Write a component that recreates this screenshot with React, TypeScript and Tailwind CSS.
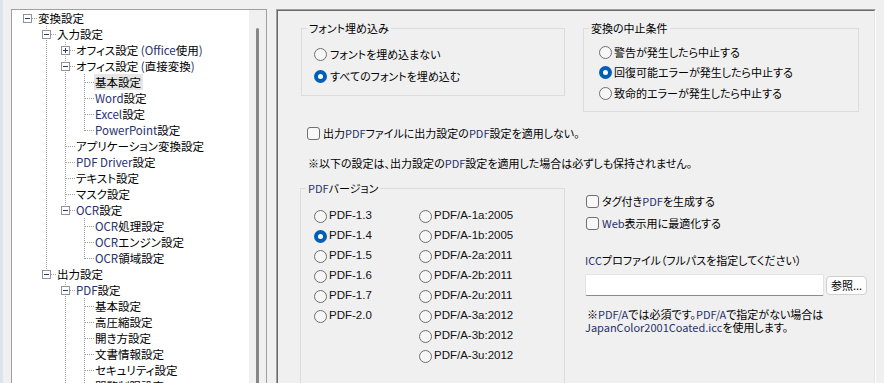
import React from "react";

type TreeNode = {
  label: string;
  level: number;
  box?: "-" | "+";
  last?: boolean;
  selected?: boolean;
};

const tree: TreeNode[] = [
  { label: "変換設定", level: 0, box: "-", last: true },
  { label: "入力設定", level: 1, box: "-" },
  { label: "オフィス設定 (Office使用)", level: 2, box: "+" },
  { label: "オフィス設定 (直接変換)", level: 2, box: "-" },
  { label: "基本設定", level: 3, selected: true },
  { label: "Word設定", level: 3 },
  { label: "Excel設定", level: 3 },
  { label: "PowerPoint設定", level: 3, last: true },
  { label: "アプリケーション変換設定", level: 2 },
  { label: "PDF Driver設定", level: 2 },
  { label: "テキスト設定", level: 2 },
  { label: "マスク設定", level: 2 },
  { label: "OCR設定", level: 2, box: "-", last: true },
  { label: "OCR処理設定", level: 3 },
  { label: "OCRエンジン設定", level: 3 },
  { label: "OCR領域設定", level: 3, last: true },
  { label: "出力設定", level: 1, box: "-", last: true },
  { label: "PDF設定", level: 2, box: "-" },
  { label: "基本設定", level: 3 },
  { label: "高圧縮設定", level: 3 },
  { label: "開き方設定", level: 3 },
  { label: "文書情報設定", level: 3 },
  { label: "セキュリティ設定", level: 3 },
  { label: "閲覧制限設定", level: 3 },
];

// latin runs render navy-ish like the ClearType text in the shot
function Txt({ s }: { s: string }) {
  const parts = s.split(/([\x21-\x7e][\x20-\x7e]*[\x21-\x7e]|[\x21-\x7e])/);
  return (
    <>
      {parts.map((p, i) =>
        /[\x21-\x7e]/.test(p) ? (
          <span key={i} className="text-[#27316c]">
            {p}
          </span>
        ) : (
          <React.Fragment key={i}>{p}</React.Fragment>
        )
      )}
    </>
  );
}

function Cell({
  vertical,
  own,
  last,
  box,
  root,
}: {
  vertical?: boolean;
  own?: boolean;
  last?: boolean;
  box?: "-" | "+";
  root?: boolean;
}) {
  return (
    <svg width="19" height="16" className="block shrink-0" shapeRendering="crispEdges">
      {vertical ? (
        <line x1="9.5" y1="0" x2="9.5" y2="16" stroke="#a0a0a0" strokeDasharray="1 1" />
      ) : null}
      {own && !root ? (
        <line x1="9.5" y1="0" x2="9.5" y2={last ? 9 : 16} stroke="#a0a0a0" strokeDasharray="1 1" />
      ) : null}
      {own ? (
        <line x1="10" y1="8.5" x2="19" y2="8.5" stroke="#a0a0a0" strokeDasharray="1 1" />
      ) : null}
      {box ? (
        <>
          <rect x="5.5" y="4.5" width="8" height="8" fill="#fff" stroke="#939393" />
          <line x1="7" y1="8.5" x2="12" y2="8.5" stroke="#2b3a7a" />
          {box === "+" ? (
            <line x1="9.5" y1="6" x2="9.5" y2="11" stroke="#2b3a7a" />
          ) : null}
        </>
      ) : null}
    </svg>
  );
}

function TreeRows() {
  const lastAt: boolean[] = [];
  return (
    <>
      {tree.map((n, i) => {
        lastAt[n.level] = !!n.last;
        const cells = [];
        for (let a = 0; a < n.level; a++) {
          cells.push(<Cell key={a} vertical={a > 0 && !lastAt[a]} />);
        }
        cells.push(
          <Cell key="own" own last={n.last} box={n.box} root={n.level === 0} />
        );
        return (
          <div key={i} className="flex h-[16px] items-center">
            {cells}
            <span
              className={
                n.selected
                  ? "h-[16px] whitespace-nowrap bg-[#e6e6e6] pl-[1px] pr-[2px] leading-[16px]"
                  : "h-[16px] whitespace-nowrap pl-[1px] leading-[16px]"
              }
            >
              <Txt s={n.label} />
            </span>
          </div>
        );
      })}
    </>
  );
}

function Radio({ checked }: { checked?: boolean }) {
  return checked ? (
    <span className="flex h-[13px] w-[13px] shrink-0 items-center justify-center rounded-full bg-[#005fb8]">
      <span className="h-[5px] w-[5px] rounded-full bg-white" />
    </span>
  ) : (
    <span className="h-[13px] w-[13px] shrink-0 rounded-full border border-[#6f6f6f] bg-[#f6f6f6]" />
  );
}

function Check() {
  return (
    <span className="h-[13px] w-[13px] shrink-0 rounded-[3px] border border-[#6f6f6f] bg-[#f8f8f8]" />
  );
}

function GroupBox({
  title,
  className,
  children,
}: {
  title: string;
  className: string;
  children: React.ReactNode;
}) {
  return (
    <div className={"relative shrink-0 border border-[#dcdcdc] " + className}>
      <span className="absolute -top-[9px] left-[5px] bg-[#f0f0f0] px-[2px] leading-[16px]">
        <Txt s={title} />
      </span>
      {children}
    </div>
  );
}

const pdfLeft = ["PDF-1.3", "PDF-1.4", "PDF-1.5", "PDF-1.6", "PDF-1.7", "PDF-2.0"];
const pdfRight = [
  "PDF/A-1a:2005",
  "PDF/A-1b:2005",
  "PDF/A-2a:2011",
  "PDF/A-2b:2011",
  "PDF/A-2u:2011",
  "PDF/A-3a:2012",
  "PDF/A-3b:2012",
  "PDF/A-3u:2012",
];

function PdfRadio({ label, checked }: { label: string; checked?: boolean }) {
  return (
    <div className="flex h-[20px] items-center">
      <Radio checked={checked} />
      <span className="ml-[2px] text-[11.5px] text-[#111] [font-family:'Liberation_Sans',Arial,sans-serif]">
        {label}
      </span>
    </div>
  );
}

export default function App() {
  return (
    <div className="flex h-[383px] w-[884px] overflow-hidden bg-[#f0f0f0] text-[11px] text-black [font-family:'Noto_Sans_CJK_JP',sans-serif] [font-feature-settings:'palt']">
      <div className="w-[3px] shrink-0 bg-[#dee4eb]" />

      {/* tree */}
      <div className="ml-[8px] mt-[9px] flex h-[400px] w-[256px] shrink-0 border border-[#a0a0a0] bg-white">
        <div className="flex-1 overflow-hidden pl-[6px] text-[11.5px]">
          <TreeRows />
        </div>
        <div className="flex w-[17px] shrink-0 justify-center bg-[#f0f0f0] pt-[18px]">
          <div className="h-full w-[3px] rounded-full bg-[#868686]" />
        </div>
      </div>

      {/* settings panel */}
      <div className="ml-[9px] mt-[9px] h-[400px] w-[600px] shrink-0 border-l border-r border-t border-l-[#a0a0a0] border-r-white border-t-[#a0a0a0]">
        <div className="flex h-full flex-col border-l border-r border-t border-l-[#696969] border-r-[#e3e3e3] border-t-[#696969]">
          <div className="mt-[17px] flex items-start">
            <GroupBox title="フォント埋め込み" className="ml-[23px] w-[264px] pb-[8px] pl-[12px] pt-[14px]">
              <div className="flex h-[22px] items-center">
                <Radio />
                <span className="ml-[3px]">フォントを埋め込まない</span>
              </div>
              <div className="flex h-[22px] items-center">
                <Radio checked />
                <span className="ml-[3px]">すべてのフォントを埋め込む</span>
              </div>
            </GroupBox>
            <GroupBox title="変換の中止条件" className="ml-[18px] w-[276px] pb-[8px] pl-[15px] pt-[13px]">
              <div className="flex h-[20px] items-center">
                <Radio />
                <span className="ml-[2px]">警告が発生したら中止する</span>
              </div>
              <div className="flex h-[21px] items-center">
                <Radio checked />
                <span className="ml-[2px]">回復可能エラーが発生したら中止する</span>
              </div>
              <div className="flex h-[20px] items-center">
                <Radio />
                <span className="ml-[2px]">致命的エラーが発生したら中止する</span>
              </div>
            </GroupBox>
          </div>

          <div className="ml-[29px] mt-[13px] flex h-[16px] items-center">
            <Check />
            <span className="ml-[3px]">
              <Txt s="出力PDFファイルに出力設定のPDF設定を適用しない。" />
            </span>
          </div>

          <p className="ml-[30px] mt-[14px] h-[16px] leading-[16px]">
            <Txt s="※以下の設定は、出力設定のPDF設定を適用した場合は必ずしも保持されません。" />
          </p>

          <div className="flex items-start">
            <GroupBox title="PDFバージョン" className="ml-[22px] mt-[17px] h-[250px] w-[265px] pl-[13px] pt-[17px]">
              <div className="flex">
                <div className="w-[105px]">
                  {pdfLeft.map((l) => (
                    <PdfRadio key={l} label={l} checked={l === "PDF-1.4"} />
                  ))}
                </div>
                <div>
                  {pdfRight.map((l) => (
                    <PdfRadio key={l} label={l} />
                  ))}
                </div>
              </div>
            </GroupBox>

            <div className="ml-[20px] mt-[22px] flex flex-col">
              <div className="flex h-[16px] items-center pl-[1px]">
                <Check />
                <span className="ml-[3px]">
                  <Txt s="タグ付きPDFを生成する" />
                </span>
              </div>
              <div className="mt-[6px] flex h-[16px] items-center pl-[1px]">
                <Check />
                <span className="ml-[3px]">
                  <Txt s="Web表示用に最適化する" />
                </span>
              </div>
              <p className="mt-[21px] h-[16px] leading-[16px]">
                <Txt s="ICCプロファイル（フルパスを指定してください）" />
              </p>
              <div className="mt-[6px] flex items-center gap-[2px]">
                <div className="h-[22px] w-[239px] rounded-[2px] border border-[#e3e3e3] border-b-[#8a8a8a] bg-white" />
                <button className="h-[19px] w-[41px] rounded-[4px] border border-[#d0d0d0] bg-[#fdfdfd] text-[11px] leading-[17px]">
                  参照...
                </button>
              </div>
              <p className="mt-[12px] leading-[13px]">
                <span className="pl-[2px]">
                  <Txt s="※PDF/Aでは必須です。PDF/Aで指定がない場合は" />
                </span>
                <br />
                <Txt s="JapanColor2001Coated.iccを使用します。" />
              </p>
            </div>
          </div>
        </div>
      </div>
    </div>
  );
}
